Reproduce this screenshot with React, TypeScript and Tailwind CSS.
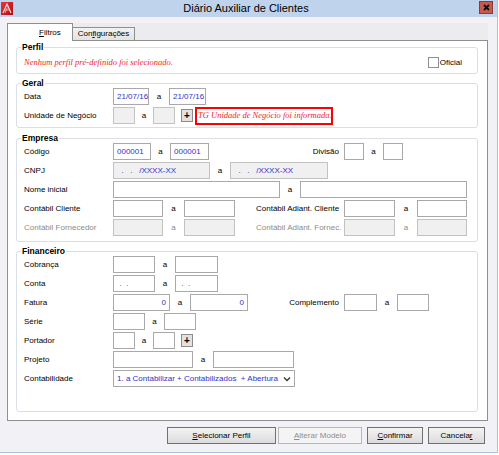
import React from "react";
import clsx from "clsx";

const sans = "font-['Liberation_Sans',Arial,sans-serif]";
const serif = "font-['Liberation_Serif','Times_New_Roman',serif]";

type Kids = { children?: React.ReactNode };

function Field({ className, gray, right, children }: Kids & { className: string; gray?: boolean; right?: boolean }) {
  return (
    <div
      className={clsx(
        "h-[17px] shrink-0 border flex items-center px-[3px] text-[8px] leading-none text-[#3232c8] whitespace-pre",
        gray ? "bg-[#f0f0f0] border-[#c2c2c2]" : "bg-white border-[#a9a9a9]",
        right && "justify-end",
        className
      )}
    >
      {children}
    </div>
  );
}

function A({ className = "w-[20px]", muted }: { className?: string; muted?: boolean }) {
  return <span className={clsx("shrink-0 text-center", muted && "text-[#8c8c8c]", className)}>a</span>;
}

function Label({ className = "w-[89px]", muted, children }: Kids & { className?: string; muted?: boolean }) {
  return <span className={clsx("shrink-0 whitespace-nowrap", muted && "text-[#8c8c8c]", className)}>{children}</span>;
}

function Plus() {
  return (
    <div className="w-[12px] h-[13px] ml-[6px] shrink-0 border border-[#8b8b8b] bg-[#e2e2e2] flex items-center justify-center text-[10px] font-bold leading-none">
      +
    </div>
  );
}

function Row({ children }: Kids) {
  return <div className="flex items-center h-[17px]">{children}</div>;
}

function Group({ title, className, children }: Kids & { title: string; className?: string }) {
  return (
    <fieldset className={clsx("border border-[#d9dfe5] rounded-[3px] bg-white", className)}>
      <legend className="ml-[4px] px-[1px] h-[10px] text-[8.5px] leading-[10px] font-bold">{title}</legend>
      {children}
    </fieldset>
  );
}

function Btn({ className, disabled, children }: Kids & { className: string; disabled?: boolean }) {
  return (
    <div
      className={clsx(
        "h-[17px] border flex items-center justify-center text-[8px]",
        disabled
          ? "bg-[#f4f4f4] border-[#b5b9bc] text-[#8d8d8d]"
          : "bg-linear-to-b from-[#f3f3f3] to-[#dcdcdc] border-[#707070]",
        className
      )}
    >
      <span>{children}</span>
    </div>
  );
}

function AppIcon() {
  return (
    <svg width="12" height="13" viewBox="0 0 12 13" className="ml-[1px] shrink-0">
      <defs>
        <linearGradient id="ic" x1="0" y1="0" x2="1" y2="1">
          <stop offset="0" stopColor="#f0333a" />
          <stop offset="1" stopColor="#a50f14" />
        </linearGradient>
      </defs>
      <rect width="12" height="13" fill="url(#ic)" />
      <path d="M2 11 L6 2 L10 11" stroke="#fff" strokeWidth="1.2" fill="none" opacity="0.85" />
      <path d="M4 11 L6.5 5.5 M3.5 8 L9 8" stroke="#fff" strokeWidth="0.8" fill="none" opacity="0.7" />
    </svg>
  );
}

export default function App() {
  return (
    <div className={clsx("w-[499px] h-[455px] bg-white text-black text-[8px] leading-none", sans)}>
      <div className="w-[498px] h-[453px] bg-[#f1f1f6] border-r border-b border-[#a9c2e0] flex flex-col">
        {/* title bar */}
        <div className="h-[17px] shrink-0 bg-[#bfd3ec] flex items-center">
          <AppIcon />
          <div className="flex-1 text-center text-[11px] text-black">Diário Auxiliar de Clientes</div>
          <div className="w-[14px] h-[13px] mr-[4px] mb-[2px] bg-[#c9584f] border border-[#8e3a34] flex items-center justify-center">
            <svg width="7" height="7" viewBox="0 0 7 7">
              <path d="M1 1 L6 6 M6 1 L1 6" stroke="#111" strokeWidth="1.8" />
            </svg>
          </div>
        </div>

        {/* tabs */}
        <div className="ml-[7px] w-[481px] mt-[6px] flex items-end h-[17px] bg-[#ececef]">
          <div className="relative z-10 w-[66px] h-[18px] -mb-px bg-white border border-b-0 border-[#8e8f8f] flex items-center pl-[31px]">
            <span><u>F</u>iltros</span>
          </div>
          <div className="w-[62px] h-[13px] bg-linear-to-b from-[#f2f2f2] to-[#e3e3e3] border border-b-0 border-l-0 border-[#8e8f8f] flex items-center justify-center">
            <span>Con<u>f</u>igurações</span>
          </div>
        </div>

        {/* panel */}
        <div className="ml-[7px] w-[481px] h-[381px] shrink-0 bg-white border border-[#8e8f8f] pt-[1px] pl-[8px]">
          <Group title="Perfil" className="w-[462px]">
            <div className="h-[21px] flex items-center justify-between pl-[7px] pr-[15px]">
              <span className={clsx("italic text-[8.5px] text-[#f2222e]", serif)}>Nenhum perfil pré-definido foi selecionado.</span>
              <div className="flex items-center gap-[1px]">
                <div className="w-[11px] h-[11px] border border-[#8f8f8f] bg-white" />
                <span>Oficial</span>
              </div>
            </div>
          </Group>

          <Group title="Geral" className="w-[462px] mt-[4px]">
            <div className="pl-[7px] pb-[3px] flex flex-col gap-[2px]">
              <Row>
                <Label>Data</Label>
                <Field className="w-[36px]">21/07/16</Field>
                <A />
                <Field className="w-[37px]">21/07/16</Field>
              </Row>
              <Row>
                <Label>Unidade de Negócio</Label>
                <Field gray className="w-[22px]" />
                <A className="w-[18px]" />
                <Field gray className="w-[22px]" />
                <Plus />
                <div className={clsx("ml-[2px] w-[138px] h-[18px] border-2 border-[#ff0000] flex items-center pl-[1px] italic text-[8.5px] text-[#f2222e] whitespace-nowrap", serif)}>
                  TG Unidade de Negócio foi informada.
                </div>
              </Row>
            </div>
          </Group>

          <Group title="Empresa" className="w-[462px] mt-[5px]">
            <div className="pl-[7px] pb-[5px] flex flex-col gap-[2px]">
              <Row>
                <div className="w-[232px] flex items-center">
                  <Label>Código</Label>
                  <Field className="w-[38px]">000001</Field>
                  <A className="w-[19px]" />
                  <Field className="w-[39px]">000001</Field>
                </div>
                <Label className="w-[88px] text-right pr-[5px]">Divisão</Label>
                <Field className="w-[20px]" />
                <A className="w-[19px]" />
                <Field className="w-[20px]" />
              </Row>
              <Row>
                <Label>CNPJ</Label>
                <Field gray className="w-[97px] text-[#8c8c8c]">{"  .   .   /XXXX-XX"}</Field>
                <A />
                <Field gray className="w-[98px] text-[#8c8c8c]">{"  .   .   /XXXX-XX"}</Field>
              </Row>
              <Row>
                <Label>Nome inicial</Label>
                <Field className="w-[167px]" />
                <A />
                <Field className="w-[167px]" />
              </Row>
              <Row>
                <div className="w-[232px] flex items-center">
                  <Label>Contábil Cliente</Label>
                  <Field className="w-[50px]" />
                  <A className="w-[21px]" />
                  <Field className="w-[51px]" />
                </div>
                <Label className="w-[88px]">Contábil Adiant. Cliente</Label>
                <Field className="w-[51px]" />
                <A className="w-[22px]" />
                <Field className="w-[50px]" />
              </Row>
              <Row>
                <div className="w-[232px] flex items-center">
                  <Label muted>Contábil Fornecedor</Label>
                  <Field gray className="w-[50px]" />
                  <A muted className="w-[21px]" />
                  <Field gray className="w-[51px]" />
                </div>
                <Label muted className="w-[88px]">Contábil Adiant. Fornec.</Label>
                <Field gray className="w-[51px]" />
                <A muted className="w-[22px]" />
                <Field gray className="w-[50px]" />
              </Row>
            </div>
          </Group>

          <Group title="Financeiro" className="w-[462px] mt-[4px]">
            <div className="pl-[7px] pb-[24px] flex flex-col gap-[2px]">
              <Row>
                <Label>Cobrança</Label>
                <Field className="w-[42px]" />
                <A />
                <Field className="w-[43px]" />
              </Row>
              <Row>
                <Label>Conta</Label>
                <Field className="w-[42px]">{" .  ."}</Field>
                <A />
                <Field className="w-[43px]">{" .  ."}</Field>
              </Row>
              <Row>
                <div className="w-[232px] flex items-center">
                  <Label>Fatura</Label>
                  <Field right className="w-[57px]">0</Field>
                  <A />
                  <Field right className="w-[58px]">0</Field>
                </div>
                <Label className="w-[88px] text-right pr-[5px]">Complemento</Label>
                <Field className="w-[33px]" />
                <A />
                <Field className="w-[32px]" />
              </Row>
              <Row>
                <Label>Série</Label>
                <Field className="w-[32px]" />
                <A className="w-[19px]" />
                <Field className="w-[32px]" />
              </Row>
              <Row>
                <Label>Portador</Label>
                <Field className="w-[22px]" />
                <A className="w-[18px]" />
                <Field className="w-[22px]" />
                <Plus />
              </Row>
              <Row>
                <Label>Projeto</Label>
                <Field className="w-[80px]" />
                <A />
                <Field className="w-[81px]" />
              </Row>
              <Row>
                <Label>Contabilidade</Label>
                <div className="w-[182px] h-[17px] border border-[#a9a9a9] bg-white flex items-center pl-[3px] pr-[3px] text-[#3232c8]">
                  <span className="flex-1 whitespace-pre">1. a Contabilizar + Contabilizados  + Abertura</span>
                  <svg width="8" height="6" viewBox="0 0 8 6">
                    <path d="M1 1.5 L4 4.5 L7 1.5" stroke="#333" strokeWidth="1.3" fill="none" />
                  </svg>
                </div>
              </Row>
            </div>
          </Group>
        </div>

        {/* buttons */}
        <div className="flex justify-end gap-[5px] pr-[12px] mt-[6px]">
          <Btn className="w-[109px] border-[#3c7fb1]">
            <u>S</u>elecionar Perfil
          </Btn>
          <Btn disabled className="w-[84px] -ml-[3px]">
            <u>A</u>lterar Modelo
          </Btn>
          <Btn className="w-[56px]">
            <u>C</u>onfirmar
          </Btn>
          <Btn className="w-[57px]">
            Cancela<u>r</u>
          </Btn>
        </div>
      </div>
    </div>
  );
}
